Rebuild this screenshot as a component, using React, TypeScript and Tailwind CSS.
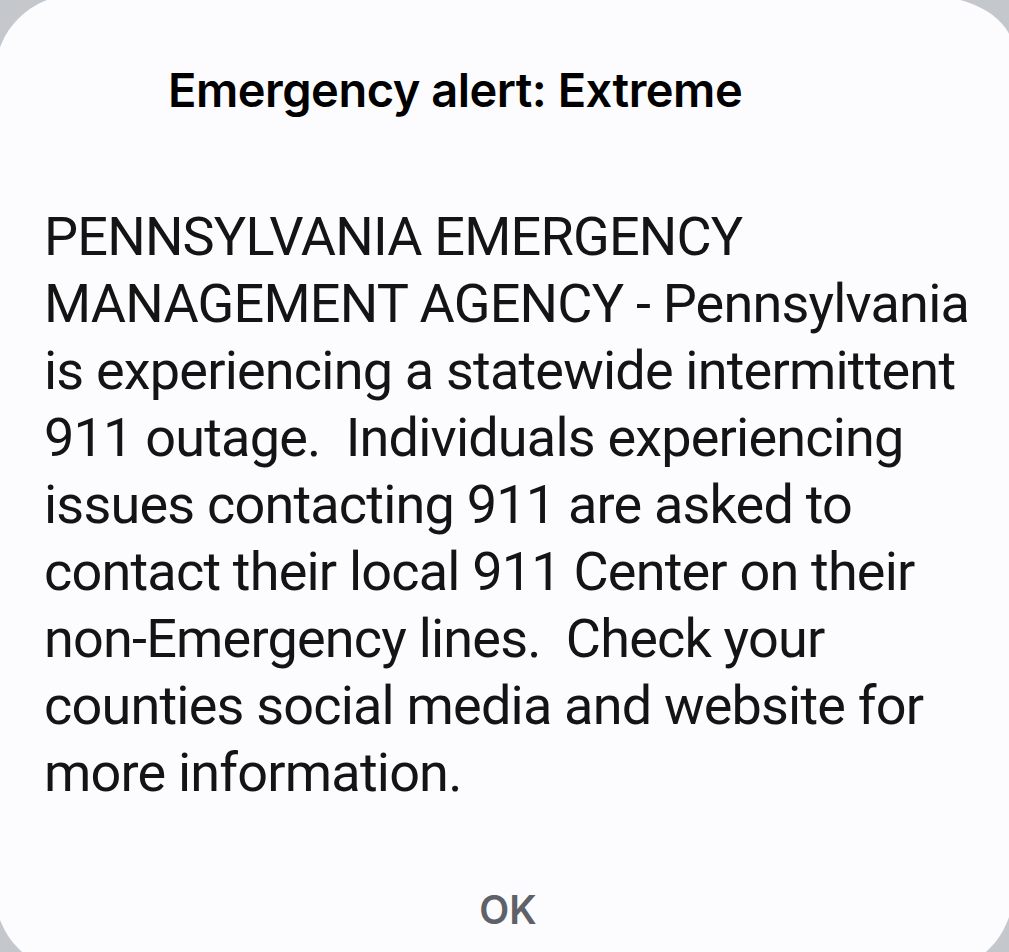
const lines = [
  'PENNSYLVANIA EMERGENCY',
  'MANAGEMENT AGENCY - Pennsylvania',
  'is experiencing a statewide intermittent',
  '911 outage.  Individuals experiencing',
  'issues contacting 911 are asked to',
  'contact their local 911 Center on their',
  'non-Emergency lines.  Check your',
  'counties social media and website for',
  'more information.',
];

export default function App() {
  return (
    <div className="h-[952px] w-[1009px] overflow-hidden bg-[#c4c7cc]">
      <div
        className="-ml-[5px] -mt-[5px] flex h-[977px] w-[1018px] flex-col rounded-[80px] rounded-tr-[90px_55px] bg-[#fcfcfe] text-[#141414]"
        style={{ fontFamily: 'Inter, "Noto Sans", sans-serif' }}
      >
        <h1 className="pl-[173px] pt-[67px] text-[47px] font-semibold leading-[56px] tracking-[-0.5px] text-black">
          Emergency alert: Extreme
        </h1>
        <div
          className="mt-[85px] pl-[49px] text-[54px] leading-[67px] tracking-[-0.8px]"
          style={{ fontFamily: 'Roboto, "Noto Sans", sans-serif' }}
        >
          {lines.map((l) => (
            <div key={l} className="whitespace-pre">
              {l}
            </div>
          ))}
        </div>
        <div className="mt-[80px] flex justify-center pl-[8px]">
          <button className="px-6 text-[39px] font-semibold leading-[48px] text-[#5f6168]">OK</button>
        </div>
      </div>
    </div>
  );
}
